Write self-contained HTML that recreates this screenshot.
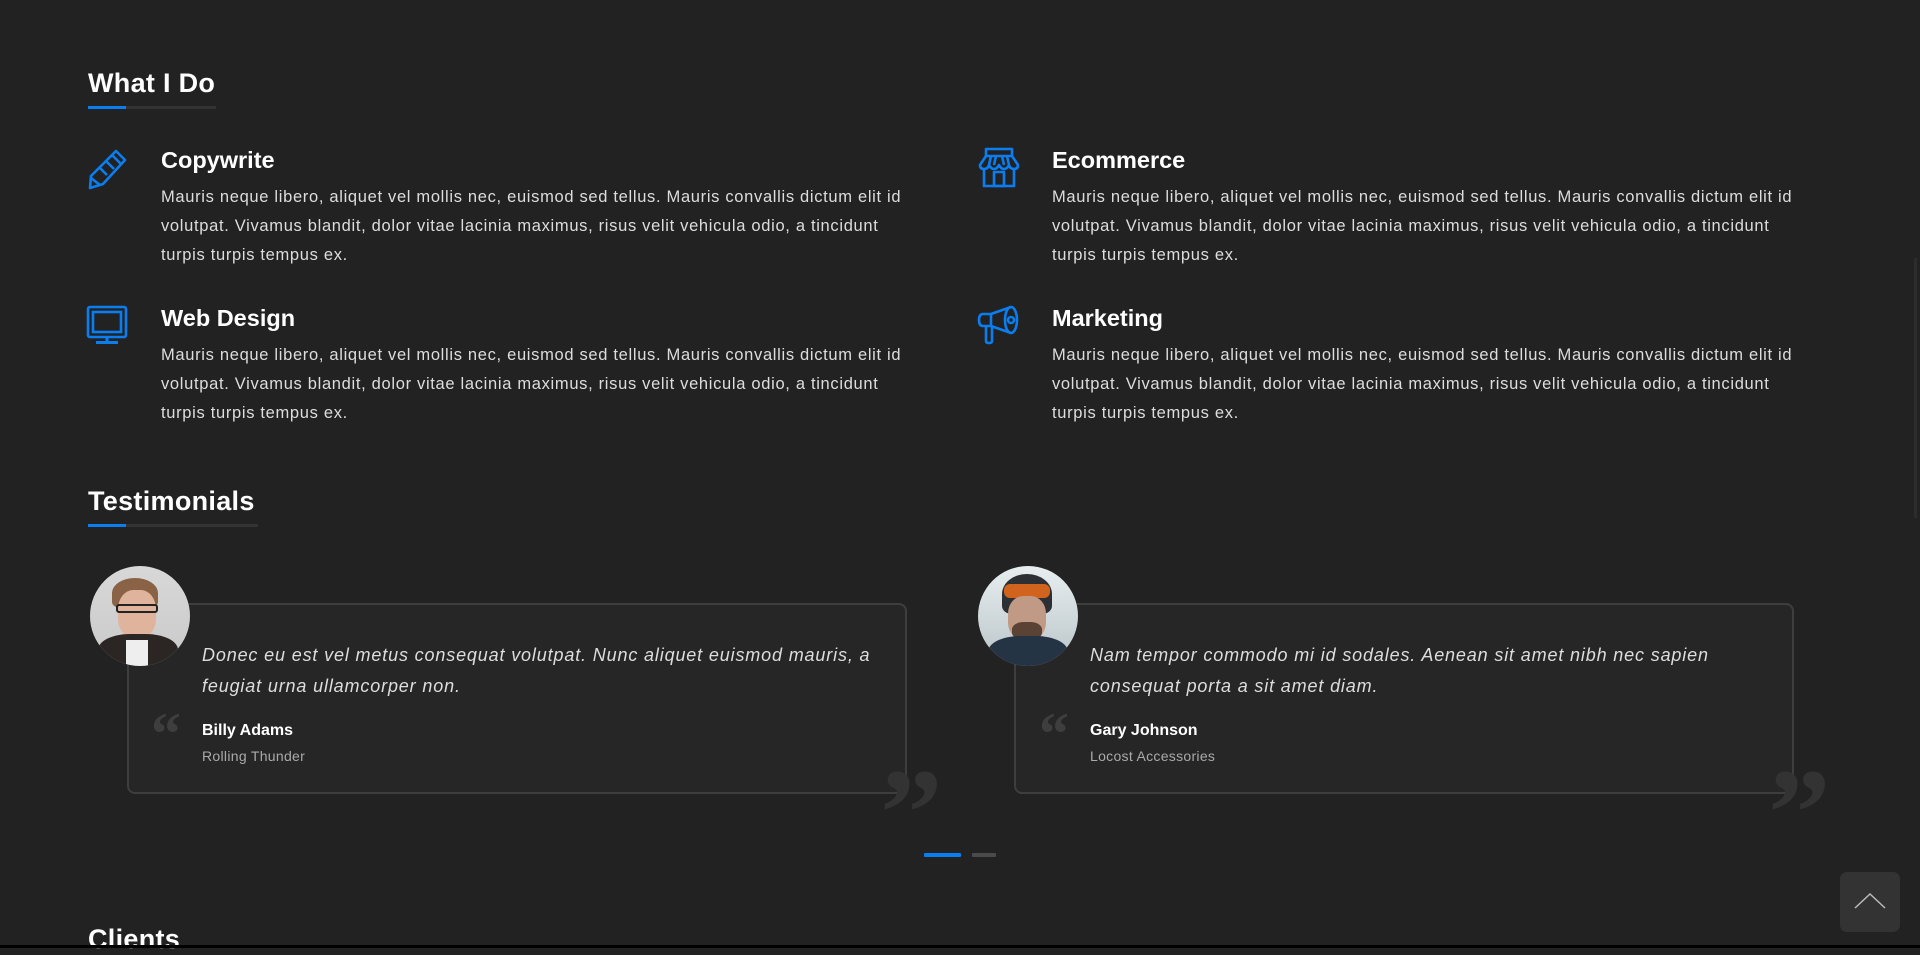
<!DOCTYPE html>
<html><head><meta charset="utf-8"><style>
*{margin:0;padding:0;box-sizing:border-box}
html,body{width:1920px;height:948px;overflow:hidden;background:#222;font-family:"Liberation Sans",sans-serif;color:#ddd}
.abs{position:absolute}
h2{position:absolute;color:#fff;font-size:27px;font-weight:bold;left:88px;letter-spacing:.3px}
.ul{position:absolute;left:88px;height:3px;background:#333}
.ul i{display:block;height:3px;width:38px;background:#0a7ef0}
.t{position:absolute;color:#fff;font-size:23.5px;font-weight:bold}
.p{position:absolute;font-size:16.5px;line-height:29px;letter-spacing:.68px;white-space:nowrap;color:#ddd}
.card{position:absolute;top:603px;width:780px;height:191px;border:2px solid #3e3e3e;border-radius:8px;background:#262626}
.q{position:absolute;font-style:italic;font-size:18px;line-height:31px;white-space:nowrap;color:#ddd;letter-spacing:.85px}
.nm{position:absolute;font-weight:bold;font-size:16px;color:#fff}
.co{position:absolute;font-size:14px;color:#aaa;letter-spacing:.3px}
.oq{position:absolute;font-family:"Liberation Serif",serif;font-weight:bold;color:#3e3e3e;font-size:60px;line-height:60px}
.cq{position:absolute;font-family:"Liberation Serif",serif;font-weight:bold;color:#333;font-size:125px;line-height:125px}
.av{position:absolute;top:566px;width:100px;height:100px;border-radius:50%;overflow:hidden}
</style></head><body>

<h2 style="top:68px">What I Do</h2>
<div class="ul" style="top:106px;width:128px"><i></i></div>

<svg class="abs" style="left:86px;top:148px" width="44" height="42" viewBox="0 0 44 42" fill="none" stroke="#0a7ef0" stroke-width="2.6" stroke-linejoin="round"><path d="M30 3 L39 12 L17 36 L4 40 L5 28 Z"/><path d="M26 7 L35 16 M14 20 L21 27 M20 13 L28 21 M5 30 L14 37"/></svg>
<div class="t" style="left:161px;top:147px">Copywrite</div>
<div class="p" style="left:161px;top:183px">Mauris neque libero, aliquet vel mollis nec, euismod sed tellus. Mauris convallis dictum elit id<br>volutpat. Vivamus blandit, dolor vitae lacinia maximus, risus velit vehicula odio, a tincidunt<br>turpis turpis tempus ex.</div>

<svg class="abs" style="left:978px;top:147px" width="42" height="42" viewBox="0 0 42 42" fill="none" stroke="#0a7ef0" stroke-width="2.6" stroke-linejoin="round"><rect x="8" y="2" width="26" height="7"/><path d="M8 9 L2 18 Q2 22 6 22 Q10 22 11 18 Q13 22 16 22 Q19 22 21 18 Q23 22 26 22 Q29 22 31 18 Q32 22 36 22 Q40 22 40 18 L34 9"/><path d="M13 9 L11 18 M18 9 L16 18 M24 9 L26 18 M29 9 L31 18"/><path d="M6 22 V39 H36 V22"/><rect x="16" y="25" width="10" height="14"/></svg>
<div class="t" style="left:1052px;top:147px">Ecommerce</div>
<div class="p" style="left:1052px;top:183px">Mauris neque libero, aliquet vel mollis nec, euismod sed tellus. Mauris convallis dictum elit id<br>volutpat. Vivamus blandit, dolor vitae lacinia maximus, risus velit vehicula odio, a tincidunt<br>turpis turpis tempus ex.</div>

<svg class="abs" style="left:86px;top:305px" width="44" height="40" viewBox="0 0 44 40" fill="none" stroke="#0a7ef0" stroke-width="2.6"><rect x="2" y="2" width="38" height="30" rx="2"/><rect x="7" y="7" width="28" height="20"/><path d="M21 32 V36 M10 37.5 H32" stroke-width="3"/></svg>
<div class="t" style="left:161px;top:305px">Web Design</div>
<div class="p" style="left:161px;top:341px">Mauris neque libero, aliquet vel mollis nec, euismod sed tellus. Mauris convallis dictum elit id<br>volutpat. Vivamus blandit, dolor vitae lacinia maximus, risus velit vehicula odio, a tincidunt<br>turpis turpis tempus ex.</div>

<svg class="abs" style="left:977px;top:303px" width="44" height="44" viewBox="0 0 44 44" fill="none" stroke="#0a7ef0" stroke-width="2.6" stroke-linejoin="round"><ellipse cx="34" cy="17" rx="6" ry="13"/><path d="M34 4 L14 11 H6 Q2 11 2 17 Q2 23 6 23 H14 L34 30"/><path d="M14 11 V23"/><path d="M9 23 V38 Q9 40 12 40 Q15 40 15 38 V24"/><circle cx="34" cy="17" r="3"/></svg>
<div class="t" style="left:1052px;top:305px">Marketing</div>
<div class="p" style="left:1052px;top:341px">Mauris neque libero, aliquet vel mollis nec, euismod sed tellus. Mauris convallis dictum elit id<br>volutpat. Vivamus blandit, dolor vitae lacinia maximus, risus velit vehicula odio, a tincidunt<br>turpis turpis tempus ex.</div>

<h2 style="top:486px">Testimonials</h2>
<div class="ul" style="top:524px;width:170px"><i></i></div>

<div class="card" style="left:127px"></div>
<div class="cq" style="left:880px;top:752px">”</div>
<div class="av" style="left:90px;background:linear-gradient(#d8d8d8,#c9c9c9)">
<div class="abs" style="left:22px;top:12px;width:46px;height:30px;border-radius:50% 50% 20% 20%;background:#8a6246"></div>
<div class="abs" style="left:28px;top:24px;width:38px;height:48px;border-radius:40%;background:#e0b49c"></div>
<div class="abs" style="left:26px;top:38px;width:42px;height:9px;border:2px solid #222;border-radius:3px"></div>
<div class="abs" style="left:8px;top:68px;width:80px;height:40px;border-radius:40% 40% 0 0;background:#2b2624"></div>
<div class="abs" style="left:36px;top:74px;width:22px;height:30px;background:#eee"></div>
</div>
<div class="oq" style="left:151px;top:704px">“</div>
<div class="q" style="left:202px;top:640px">Donec eu est vel metus consequat volutpat. Nunc aliquet euismod mauris, a<br>feugiat urna ullamcorper non.</div>
<div class="nm" style="left:202px;top:722px">Billy Adams</div>
<div class="co" style="left:202px;top:748px">Rolling Thunder</div>

<div class="card" style="left:1014px"></div>
<div class="cq" style="left:1768px;top:752px">”</div>
<div class="av" style="left:978px;background:linear-gradient(#e8eef0,#b9c4c8)">
<div class="abs" style="left:24px;top:8px;width:50px;height:40px;border-radius:50% 50% 20% 20%;background:#2c2f33"></div>
<div class="abs" style="left:26px;top:18px;width:46px;height:14px;border-radius:6px;background:#d0641e"></div>
<div class="abs" style="left:30px;top:30px;width:38px;height:44px;border-radius:40%;background:#c09a84"></div>
<div class="abs" style="left:34px;top:56px;width:30px;height:18px;border-radius:40%;background:#5a4234"></div>
<div class="abs" style="left:10px;top:70px;width:80px;height:40px;border-radius:40% 40% 0 0;background:#243444"></div>
</div>
<div class="oq" style="left:1039px;top:704px">“</div>
<div class="q" style="left:1090px;top:640px">Nam tempor commodo mi id sodales. Aenean sit amet nibh nec sapien<br>consequat porta a sit amet diam.</div>
<div class="nm" style="left:1090px;top:722px">Gary Johnson</div>
<div class="co" style="left:1090px;top:748px">Locost Accessories</div>

<div class="abs" style="left:924px;top:853px;width:37px;height:4px;background:#0a7ef0;border-radius:1px"></div>
<div class="abs" style="left:972px;top:853px;width:24px;height:4px;background:#4a4a4a;border-radius:1px"></div>

<h2 style="top:924px">Clients</h2>

<div class="abs" style="left:1840px;top:872px;width:60px;height:60px;border-radius:7px;background:#333"></div>
<svg class="abs" style="left:1852px;top:888px" width="36" height="26" viewBox="0 0 36 26" fill="none" stroke="#bbb" stroke-width="1.5"><path d="M3 20 L18 6 L33 20"/></svg>

<div class="abs" style="left:1914px;top:258px;width:3px;height:260px;background:#2c2c2c"></div>
<div class="abs" style="left:0;top:945px;width:1920px;height:3px;background:#000"></div>
</body></html>
